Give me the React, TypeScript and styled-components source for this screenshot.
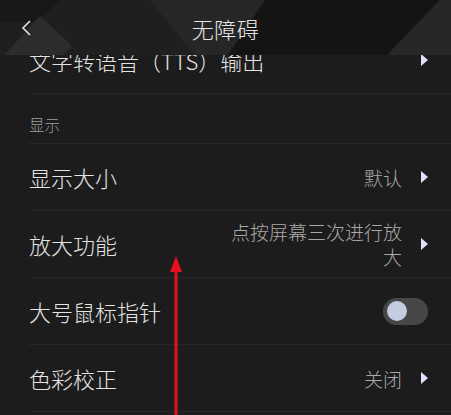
import React from "react";
import styled, { createGlobalStyle } from "styled-components";

const GlobalStyle = createGlobalStyle`
  html, body { margin: 0; padding: 0; background: #1c1c1c; }
  body { font-family: "Noto Sans CJK SC", "Noto Sans", sans-serif; }
`;

const Screen = styled.div`
  position: relative;
  width: 451px;
  height: 415px;
  overflow: hidden;
  background: #1c1c1c;
  font-weight: 300;
`;

const Header = styled.header`
  position: absolute;
  top: 0;
  left: 0;
  right: 0;
  height: 55px;
  z-index: 2;
  display: flex;
  align-items: center;
  justify-content: center;
  background: #1f1f1f;
  overflow: hidden;
`;

const HeaderArt = styled.svg`
  position: absolute;
  inset: 0;
  width: 100%;
  height: 100%;
`;

const BackButton = styled.button`
  position: absolute;
  left: 16px;
  top: 15px;
  width: 20px;
  height: 26px;
  padding: 0;
  border: none;
  background: transparent;
  display: flex;
  align-items: center;
  justify-content: center;
`;

const Title = styled.h1`
  position: relative;
  margin: 0;
  font-size: 22px;
  font-weight: 300;
  color: #e6e6e6;
  letter-spacing: 0.5px;
`;

const List = styled.div`
  display: flex;
  flex-direction: column;
  padding-top: 27px;
`;

const Row = styled.div`
  display: flex;
  align-items: center;
  box-sizing: border-box;
  height: 67px;
  margin-left: 29px;
  padding-right: 23px;
  border-bottom: 1px solid #272727;
`;

const SectionRow = styled.div`
  display: flex;
  align-items: flex-end;
  box-sizing: border-box;
  height: 50px;
  margin-left: 29px;
  padding-bottom: 9px;
  border-bottom: 1px solid #272727;
  font-size: 15.5px;
  line-height: 20px;
  color: #9c9c9c;
`;

const Label = styled.span`
  flex: 1;
  font-size: 22px;
  line-height: 30px;
  color: #e4e4e4;
  white-space: nowrap;
`;

const Value = styled.span`
  max-width: 180px;
  font-size: 19px;
  line-height: 25px;
  color: #a9a9a9;
  text-align: right;
  margin-right: 19px;
`;

const Arrow = styled.span`
  width: 0;
  height: 0;
  border-top: 6px solid transparent;
  border-bottom: 6px solid transparent;
  border-left: 7px solid #e0e0fa;
`;

const Toggle = styled.div`
  width: 45px;
  height: 27px;
  box-sizing: border-box;
  border-radius: 14px;
  background: #474747;
  display: flex;
  align-items: center;
  padding: 0 4px;
`;

const Knob = styled.div`
  width: 20px;
  height: 20px;
  border-radius: 50%;
  background: #c3cde0;
`;

const Pointer = styled.svg`
  position: absolute;
  left: 164px;
  top: 250px;
  z-index: 3;
`;

type Item = { label: string; value?: string; toggle?: boolean };

const items: Item[] = [
  { label: "显示大小", value: "默认" },
  { label: "放大功能", value: "点按屏幕三次进行放大" },
  { label: "大号鼠标指针", toggle: true },
  { label: "色彩校正", value: "关闭" },
];

export default function App() {
  return (
    <Screen>
      <GlobalStyle />
      <Header>
        <HeaderArt viewBox="0 0 451 55" preserveAspectRatio="none">
          <polygon points="0,0 60,0 38,22 0,22" fill="#181818" />
          <polygon points="4,55 40,16 72,46 64,55" fill="#2c2c2c" />
          <polygon points="150,0 300,0 232,55 195,55" fill="#262626" />
          <polygon points="265,0 440,0 387,55 228,55" fill="#141414" />
          <polygon points="440,0 451,0 451,55 387,55" fill="#272727" />
        </HeaderArt>
        <BackButton aria-label="返回">
          <svg width="12" height="18" viewBox="0 0 12 18">
            <polyline points="10,2 3,9 10,16" fill="none" stroke="#e0e0e0" strokeWidth="1.6" />
          </svg>
        </BackButton>
        <Title>无障碍</Title>
      </Header>
      <List>
        <Row>
          <Label>文字转语音（TTS）输出</Label>
          <Arrow />
        </Row>
        <SectionRow>显示</SectionRow>
        {items.map((it) => (
          <Row key={it.label}>
            <Label>{it.label}</Label>
            {it.toggle ? (
              <Toggle>
                <Knob />
              </Toggle>
            ) : (
              <>
                <Value>{it.value}</Value>
                <Arrow />
              </>
            )}
          </Row>
        ))}
      </List>
      <Pointer width="24" height="170" viewBox="0 0 24 170">
        <polygon points="12,6 6,22 18,22" fill="#e3101f" />
        <rect x="10.5" y="20" width="3" height="150" fill="#e3101f" />
      </Pointer>
    </Screen>
  );
}
